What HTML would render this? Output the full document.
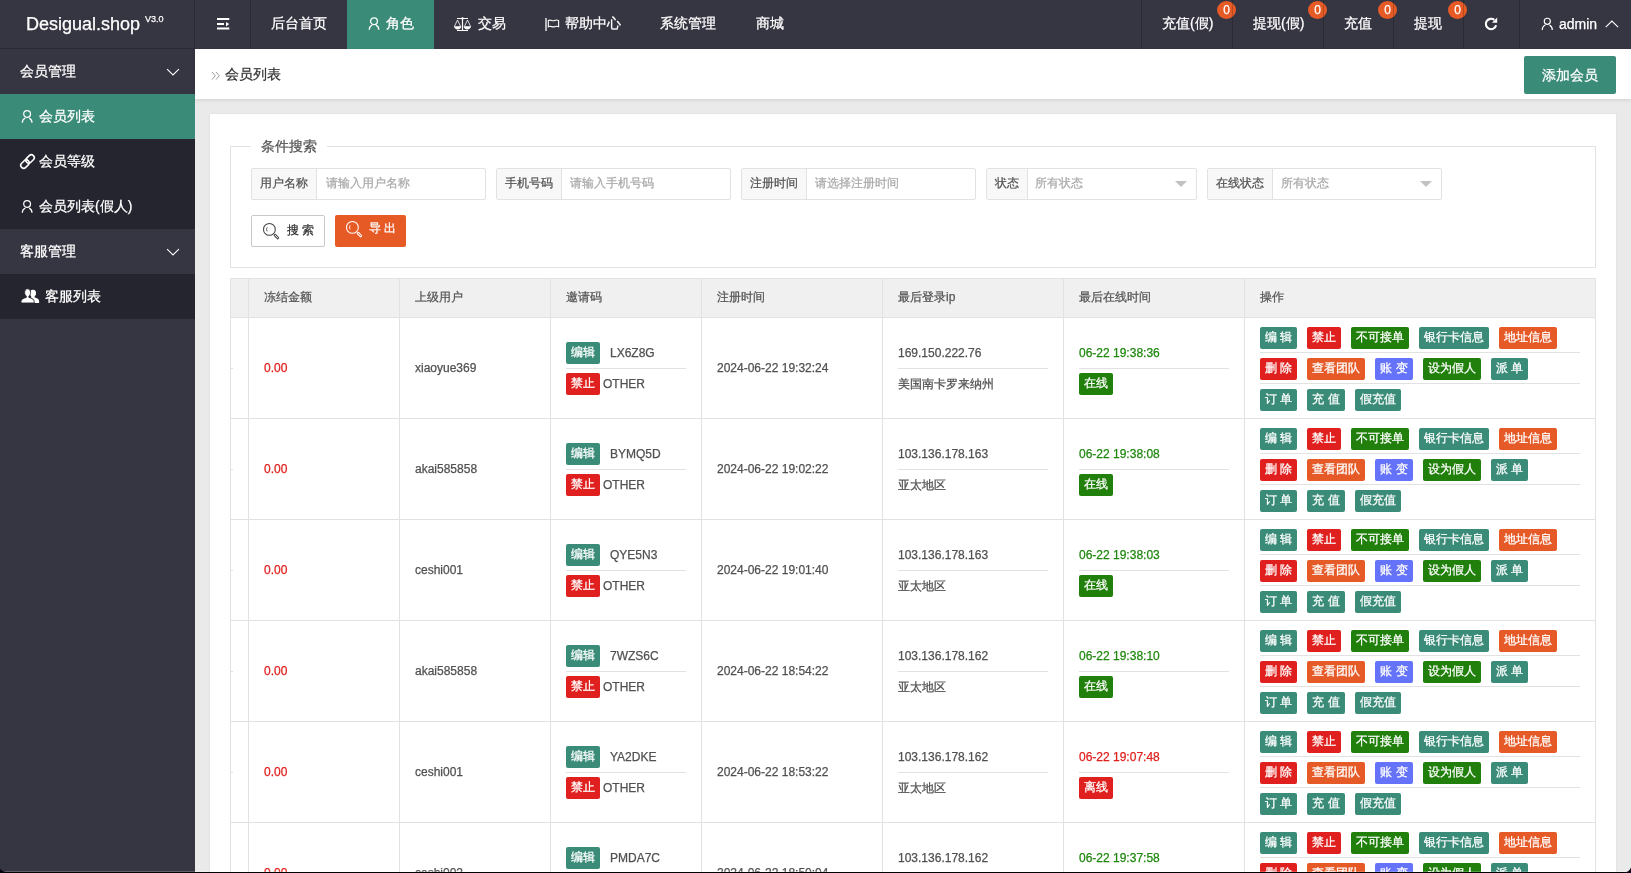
<!DOCTYPE html>
<html><head><meta charset="utf-8">
<style>
*{margin:0;padding:0;box-sizing:border-box}
html,body{width:1631px;height:873px;overflow:hidden;background:#eaeaea;font-family:"Liberation Sans",sans-serif;font-size:14px;color:#333;position:relative;-webkit-text-stroke-width:0.25px}
div,span{position:absolute;white-space:nowrap}
#header{left:0;top:0;width:1631px;height:49px;background:#363542}
#logo{left:0;top:0;width:195px;height:48px;color:#fff}
#logo .t{left:26px;top:13px;font-size:18px;line-height:22px}
#logo .v{left:145px;top:14px;font-size:9px;line-height:11px}
.hdiv{top:0;width:1px;height:49px;background:rgba(0,0,0,.2)}
.nav{top:0;height:49px;line-height:47px;color:#fff;font-size:14px}
.act,.si.act{background:#3a8c78}
.badge{top:1px;width:19px;height:18px;border-radius:50%;background:#e65a26;color:#fff;font-size:12px;line-height:18px;text-align:center}
#side{left:0;top:49px;width:195px;height:824px;background:#363542}
.sg{left:0;width:195px;height:45px;line-height:45px;color:#fff;font-size:14px}
.si{left:0;width:195px;height:45px;line-height:45px;color:#fff;font-size:14px;background:#25252f}
#crumb{left:195px;top:49px;width:1436px;height:50px;background:#fff;box-shadow:0 1px 4px rgba(0,0,0,.12)}
#card{left:210px;top:114px;width:1406px;height:780px;background:#fff;box-shadow:0 0 2px rgba(0,0,0,.08)}
.fs{left:230px;top:146px;width:1366px;height:122px;border:1px solid #e2e2e2}
.legend{left:251px;top:136px;padding:0 10px;background:#fff;font-size:14px;color:#555;line-height:20px}
.ig{top:168px;height:32px;border:1px solid #e2e2e2;border-radius:2px;background:#fff}
.ig .l{left:0;top:0;height:30px;line-height:29px;background:#f8f8f8;border-right:1px solid #e2e2e2;color:#555;font-size:12px;text-align:center}
.ig .p{top:0;height:30px;line-height:29px;color:#aaa;font-size:12px}
.tri{width:0;height:0;border-left:6px solid transparent;border-right:6px solid transparent;border-top:6px solid #c2c2c2;top:12px}
.btn{top:215px;height:32px;border-radius:2px;font-size:12px;line-height:30px}
.thead{background:#f0f0f0}
.th{height:38px;line-height:38px;font-size:12px;color:#555}
.vl{width:1px;background:#e2e2e2}
.hl{height:1px;background:#e2e2e2}
.hl2{height:1px;background:#e2e2e2}
.td{font-size:12px;line-height:20px;color:#505050}
.tag{height:22px;line-height:21px;padding:0 5px;color:#fff;border-radius:2px;font-size:12px;text-align:center}
.g{background:#3a8c78}.r{background:#e0201e}.dg{background:#21800c}.o{background:#e65a28}.b{background:#6572fa}
.td.red{color:#e0201e}.td.grn{color:#1f870e}
#bedge{left:0;top:872px;width:1631px;height:1px;background:#000}
#bhl{left:0;top:871px;width:1631px;height:1px;background:rgba(255,255,255,.22)}
#wrap{left:0;top:0;width:1631px;height:873px;will-change:transform}

</style></head><body><div id="wrap">
<div id="header">
  <div id="logo"><span class="t">Desigual.shop</span><span class="v">V3.0</span></div>
  <div class="hdiv" style="left:194px"></div><div style="left:0;top:48px;width:195px;height:1px;background:#2a2934"></div>
  <div class="hdiv" style="left:250px"></div>
  <svg style="position:absolute;left:216px;top:17px" width="14" height="14" viewBox="0 0 14 14"><path d="M1 2h12.3M1 7h7M1 11.5h12.3" stroke="#fff" stroke-width="2"/><path d="M10 5l3.2 2-3.2 2.5z" fill="#fff"/></svg>
  <div class="nav" style="left:271px">后台首页</div>
  <div class="nav act" style="left:347px;width:87px"></div>
  <svg style="position:absolute;left:368px;top:16px" width="12" height="15" viewBox="0 0 12 15"><circle cx="6" cy="5.2" r="3.4" stroke="#fff" stroke-width="1.3" fill="none"/><path d="M1.3 13.7A5 5 0 0 1 4.2 9M7.9 9.1A5 5 0 0 1 10.8 13.7" stroke="#fff" stroke-width="1.3" fill="none"/></svg>
  <div class="nav" style="left:386px">角色</div>
  <svg style="position:absolute;left:453px;top:16px" width="19" height="16" viewBox="0 0 19 16"><path d="M4 2.5h11M4 14.5h11M9.5 2v12.5" stroke="#fff" stroke-width="1.2"/><circle cx="9.5" cy="2.4" r="1.2" fill="#fff"/><path d="M1.4 10.5L4.5 4 7.6 10.5M11.4 10.5L14.5 4 17.6 10.5" stroke="#fff" stroke-width="0.8" fill="none"/><path d="M1 10.3h7.3c0 2-1.6 3.1-3.65 3.1S1 12.3 1 10.3zM10.7 10.3H18c0 2-1.6 3.1-3.65 3.1s-3.65-1.1-3.65-3.1z" fill="#fff"/></svg>
  <div class="nav" style="left:478px">交易</div>
  <svg style="position:absolute;left:544px;top:16px" width="17" height="16" viewBox="0 0 17 16"><path d="M2 2v13" stroke="#fff" stroke-width="1.3"/><path d="M4.3 4.5c2.2-1.4 4.2 1 6.3 0 1.5-.7 2.7-.6 4 0v6.2c-1.3-.6-2.5-.7-4 0-2.1 1-4.1-1.4-6.3 0z" stroke="#fff" stroke-width="1.1" fill="none"/></svg>
  <div class="nav" style="left:565px">帮助中心</div>
  <div class="nav" style="left:660px">系统管理</div>
  <div class="nav" style="left:756px">商城</div>

  <div class="nav" style="left:1162px">充值(假)</div><div class="badge" style="left:1217px">0</div>
  <div class="nav" style="left:1253px">提现(假)</div><div class="badge" style="left:1308px">0</div>
  <div class="nav" style="left:1344px">充值</div><div class="badge" style="left:1378px">0</div>
  <div class="nav" style="left:1414px">提现</div><div class="badge" style="left:1448px">0</div>
  <div class="hdiv" style="left:1141px"></div>
  <div class="hdiv" style="left:1232px"></div>
  <div class="hdiv" style="left:1323px"></div>
  <div class="hdiv" style="left:1393px"></div>
  <div class="hdiv" style="left:1463px"></div>
  <div class="hdiv" style="left:1519px"></div>
  <svg style="position:absolute;left:1483px;top:16px" width="16" height="16" viewBox="0 0 16 16"><path d="M13.1 9.2A5.2 5.2 0 1 1 11.3 3.9" stroke="#fff" stroke-width="2.1" fill="none"/><path d="M14.2 1.6v5.2H9z" fill="#fff"/></svg>
  <svg style="position:absolute;left:1541px;top:16px" width="13" height="15" viewBox="0 0 13 15"><circle cx="6.3" cy="5.3" r="3.05" stroke="#fff" stroke-width="1.15" fill="none"/><path d="M1.3 13.9A5.2 5.2 0 0 1 4.3 9M8.5 9.1A5.2 5.2 0 0 1 11.3 13.9" stroke="#fff" stroke-width="1.2" fill="none"/></svg>
  <div class="nav" style="left:1559px;top:1px">admin</div>
  <svg style="position:absolute;left:1605px;top:19px" width="14" height="10" viewBox="0 0 14 10"><path d="M0.7 8.2L6.9 2 13.1 8.2" stroke="#fff" stroke-width="1.1" fill="none"/></svg>
</div>

<div id="side">
  <div class="sg" style="top:0"><span style="left:20px">会员管理</span>
    <svg style="position:absolute;left:166px;top:18px" width="14" height="10" viewBox="0 0 14 10"><path d="M1.1 2.1L7 8 12.9 2.1" stroke="#fff" stroke-width="1.1" fill="none"/></svg></div>
  <div class="si act" style="top:45px"><span style="left:39px">会员列表</span>
    <svg style="position:absolute;left:21px;top:15px" width="13" height="15" viewBox="0 0 13 15"><circle cx="6.1" cy="5" r="3.4" stroke="#fff" stroke-width="1.2" fill="none"/><path d="M1.3 13.7A5.2 5.2 0 0 1 4.3 9M8.2 9.1A5.2 5.2 0 0 1 11 13.7" stroke="#fff" stroke-width="1.2" fill="none"/></svg></div>
  <div class="si" style="top:90px"><span style="left:39px">会员等级</span>
    <svg style="position:absolute;left:19px;top:14px" width="17" height="17" viewBox="0 0 17 17"><g transform="rotate(-45 8.5 8.5)" fill="none" stroke="#fff" stroke-width="1.6"><rect x="0.2" y="5.6" width="9.4" height="5.8" rx="2.9"/><rect x="7.4" y="5.6" width="9.4" height="5.8" rx="2.9"/></g></svg></div>
  <div class="si" style="top:135px"><span style="left:39px">会员列表(假人)</span>
    <svg style="position:absolute;left:21px;top:15px" width="13" height="15" viewBox="0 0 13 15"><circle cx="6.1" cy="5" r="3.4" stroke="#fff" stroke-width="1.2" fill="none"/><path d="M1.3 13.7A5.2 5.2 0 0 1 4.3 9M8.2 9.1A5.2 5.2 0 0 1 11 13.7" stroke="#fff" stroke-width="1.2" fill="none"/></svg></div>
  <div class="sg" style="top:180px"><span style="left:20px">客服管理</span>
    <svg style="position:absolute;left:166px;top:18px" width="14" height="10" viewBox="0 0 14 10"><path d="M1.1 2.1L7 8 12.9 2.1" stroke="#fff" stroke-width="1.1" fill="none"/></svg></div>
  <div class="si" style="top:225px"><span style="left:45px">客服列表</span>
    <svg style="position:absolute;left:21px;top:14px" width="19" height="16" viewBox="0 0 19 16"><path d="M12.3 1.8c1.7 0 2.8 1.4 2.8 3.3 0 1.4-.6 2.6-1.5 3.3v1c2.6.6 4.5 1.8 4.5 3.6v2H12.5v-2.2c0-1.6-1.2-2.6-3-3.3.4-.2.7-.4.7-.9V8.3c-.9-.7-1.5-1.9-1.5-3.2 0-1.9 1.1-3.3 2.8-3.3z" fill="#fff"/><path d="M6.5.8c1.9 0 3.1 1.6 3.1 3.7 0 1.5-.7 2.8-1.7 3.6v1.3c3 .7 5.3 2 5.3 4.1V15H0v-1.5c0-2.1 2.3-3.4 5.3-4.1V8.1C4.3 7.3 3.6 6 3.6 4.5 3.6 2.4 4.7.8 6.5.8z" fill="#fff" stroke="#25252f" stroke-width="0.9"/></svg></div>
</div>

<div id="crumb">
  <svg style="position:absolute;left:16px;top:22px" width="10" height="10" viewBox="0 0 10 10"><path d="M1 1L4.3 4.8 1 8.6M5 1L8.3 4.8 5 8.6" stroke="#999" stroke-width="1" fill="none"/></svg>
  <span style="left:30px;top:15px;font-size:14px;line-height:20px;color:#333">会员列表</span>
  <div class="act" style="left:1329px;top:7px;width:92px;height:38px;border-radius:2px;color:#fff;font-size:14px;line-height:38px;text-align:center">添加会员</div>
</div>
<div id="card"></div>
<div class="fs"></div>
<div class="legend">条件搜索</div>

<div class="ig" style="left:251px;width:235px"><div class="l" style="width:65px">用户名称</div><div class="p" style="left:74px">请输入用户名称</div></div>
<div class="ig" style="left:496px;width:235px"><div class="l" style="width:65px">手机号码</div><div class="p" style="left:73px">请输入手机号码</div></div>
<div class="ig" style="left:741px;width:235px"><div class="l" style="width:65px">注册时间</div><div class="p" style="left:73px">请选择注册时间</div></div>
<div class="ig" style="left:986px;width:211px"><div class="l" style="width:41px">状态</div><div class="p" style="left:48px">所有状态</div><div class="tri" style="left:188px"></div></div>
<div class="ig" style="left:1207px;width:235px"><div class="l" style="width:65px">在线状态</div><div class="p" style="left:73px">所有状态</div><div class="tri" style="left:212px"></div></div>

<div class="btn" style="left:251px;width:74px;border:1px solid #c9c9c9;background:#fff;color:#333">
  <svg style="position:absolute;left:10px;top:6px" width="18" height="18" viewBox="0 0 18 18"><circle cx="7.4" cy="7.4" r="5.9" stroke="#444" stroke-width="1.05" fill="none"/><path d="M5.2 5.4a3.2 3.2 0 0 0 0 3.9" stroke="#444" stroke-width="0.9" fill="none"/><path d="M13.1 13.2l2.6 2.7" stroke="#444" stroke-width="2.8" stroke-linecap="round"/><path d="M13.1 13.2l2.6 2.7" stroke="#fff" stroke-width="1" stroke-linecap="round"/></svg>
  <span style="left:35px;top:-1px">搜 索</span></div>
<div class="btn" style="left:335px;width:71px;background:#e65a26;color:#fff">
  <svg style="position:absolute;left:10px;top:5px" width="18" height="18" viewBox="0 0 18 18"><circle cx="7.4" cy="7.4" r="5.9" stroke="#fff" stroke-width="1.05" fill="none"/><path d="M5.2 5.4a3.2 3.2 0 0 0 0 3.9" stroke="#fff" stroke-width="0.9" fill="none"/><path d="M13.1 13.2l2.6 2.7" stroke="#fff" stroke-width="2.8" stroke-linecap="round"/><path d="M13.1 13.2l2.6 2.7" stroke="#e65a26" stroke-width="1" stroke-linecap="round"/></svg>
  <span style="left:34px;top:-2px">导 出</span></div>

<div class="thead" style="left:230px;top:278px;width:1366px;height:40px"></div>
<div class="th" style="left:264px;top:278px">冻结金额</div>
<div class="th" style="left:415px;top:278px">上级用户</div>
<div class="th" style="left:566px;top:278px">邀请码</div>
<div class="th" style="left:717px;top:278px">注册时间</div>
<div class="th" style="left:898px;top:278px">最后登录ip</div>
<div class="th" style="left:1079px;top:278px">最后在线时间</div>
<div class="th" style="left:1260px;top:278px">操作</div>
<div class="vl" style="left:230px;top:278px;height:595px"></div>
<div class="vl" style="left:248px;top:278px;height:595px"></div>
<div class="vl" style="left:399px;top:278px;height:595px"></div>
<div class="vl" style="left:550px;top:278px;height:595px"></div>
<div class="vl" style="left:701px;top:278px;height:595px"></div>
<div class="vl" style="left:882px;top:278px;height:595px"></div>
<div class="vl" style="left:1063px;top:278px;height:595px"></div>
<div class="vl" style="left:1244px;top:278px;height:595px"></div>
<div class="vl" style="left:1595px;top:278px;height:595px"></div>
<div class="hl" style="left:230px;top:278px;width:1366px"></div>
<div class="hl" style="left:230px;top:317px;width:1366px"></div>
<div class="hl" style="left:230px;top:418px;width:1366px"></div>
<div class="hl" style="left:230px;top:519px;width:1366px"></div>
<div class="hl" style="left:230px;top:620px;width:1366px"></div>
<div class="hl" style="left:230px;top:721px;width:1366px"></div>
<div class="hl" style="left:230px;top:822px;width:1366px"></div>
<div class="hl2" style="left:231px;top:368px;width:2px"></div>
<div class="td red" style="left:264px;top:358px">0.00</div>
<div class="td" style="left:415px;top:358px">xiaoyue369</div>
<div class="tag g" style="left:566px;top:342px">编辑</div>
<div class="td" style="left:610px;top:343px">LX6Z8G</div>
<div class="hl2" style="left:566px;top:368px;width:120px"></div>
<div class="tag r" style="left:566px;top:373px">禁止</div>
<div class="td" style="left:603px;top:374px">OTHER</div>
<div class="td" style="left:717px;top:358px">2024-06-22 19:32:24</div>
<div class="td" style="left:898px;top:343px">169.150.222.76</div>
<div class="hl2" style="left:898px;top:368px;width:150px"></div>
<div class="td" style="left:898px;top:374px">美国南卡罗来纳州</div>
<div class="td grn" style="left:1079px;top:343px">06-22 19:38:36</div>
<div class="hl2" style="left:1079px;top:368px;width:150px"></div>
<div class="tag dg" style="left:1079px;top:373px">在线</div>
<div class="tag g" style="left:1260px;top:327px;width:37px">编 辑</div>
<div class="tag r" style="left:1307px;top:327px;width:34px">禁止</div>
<div class="tag dg" style="left:1351px;top:327px;width:58px">不可接单</div>
<div class="tag g" style="left:1419px;top:327px;width:70px">银行卡信息</div>
<div class="tag o" style="left:1499px;top:327px;width:58px">地址信息</div>
<div class="hl2" style="left:1260px;top:352px;width:320px"></div>
<div class="tag r" style="left:1260px;top:358px;width:37px">删 除</div>
<div class="tag o" style="left:1307px;top:358px;width:58px">查看团队</div>
<div class="tag b" style="left:1375px;top:358px;width:38px">账 变</div>
<div class="tag dg" style="left:1423px;top:358px;width:58px">设为假人</div>
<div class="tag g" style="left:1491px;top:358px;width:37px">派 单</div>
<div class="hl2" style="left:1260px;top:383px;width:320px"></div>
<div class="tag g" style="left:1260px;top:389px;width:37px">订 单</div>
<div class="tag g" style="left:1307px;top:389px;width:38px">充 值</div>
<div class="tag g" style="left:1355px;top:389px;width:46px">假充值</div>
<div class="hl2" style="left:231px;top:469px;width:2px"></div>
<div class="td red" style="left:264px;top:459px">0.00</div>
<div class="td" style="left:415px;top:459px">akai585858</div>
<div class="tag g" style="left:566px;top:443px">编辑</div>
<div class="td" style="left:610px;top:444px">BYMQ5D</div>
<div class="hl2" style="left:566px;top:469px;width:120px"></div>
<div class="tag r" style="left:566px;top:474px">禁止</div>
<div class="td" style="left:603px;top:475px">OTHER</div>
<div class="td" style="left:717px;top:459px">2024-06-22 19:02:22</div>
<div class="td" style="left:898px;top:444px">103.136.178.163</div>
<div class="hl2" style="left:898px;top:469px;width:150px"></div>
<div class="td" style="left:898px;top:475px">亚太地区</div>
<div class="td grn" style="left:1079px;top:444px">06-22 19:38:08</div>
<div class="hl2" style="left:1079px;top:469px;width:150px"></div>
<div class="tag dg" style="left:1079px;top:474px">在线</div>
<div class="tag g" style="left:1260px;top:428px;width:37px">编 辑</div>
<div class="tag r" style="left:1307px;top:428px;width:34px">禁止</div>
<div class="tag dg" style="left:1351px;top:428px;width:58px">不可接单</div>
<div class="tag g" style="left:1419px;top:428px;width:70px">银行卡信息</div>
<div class="tag o" style="left:1499px;top:428px;width:58px">地址信息</div>
<div class="hl2" style="left:1260px;top:453px;width:320px"></div>
<div class="tag r" style="left:1260px;top:459px;width:37px">删 除</div>
<div class="tag o" style="left:1307px;top:459px;width:58px">查看团队</div>
<div class="tag b" style="left:1375px;top:459px;width:38px">账 变</div>
<div class="tag dg" style="left:1423px;top:459px;width:58px">设为假人</div>
<div class="tag g" style="left:1491px;top:459px;width:37px">派 单</div>
<div class="hl2" style="left:1260px;top:484px;width:320px"></div>
<div class="tag g" style="left:1260px;top:490px;width:37px">订 单</div>
<div class="tag g" style="left:1307px;top:490px;width:38px">充 值</div>
<div class="tag g" style="left:1355px;top:490px;width:46px">假充值</div>
<div class="hl2" style="left:231px;top:570px;width:2px"></div>
<div class="td red" style="left:264px;top:560px">0.00</div>
<div class="td" style="left:415px;top:560px">ceshi001</div>
<div class="tag g" style="left:566px;top:544px">编辑</div>
<div class="td" style="left:610px;top:545px">QYE5N3</div>
<div class="hl2" style="left:566px;top:570px;width:120px"></div>
<div class="tag r" style="left:566px;top:575px">禁止</div>
<div class="td" style="left:603px;top:576px">OTHER</div>
<div class="td" style="left:717px;top:560px">2024-06-22 19:01:40</div>
<div class="td" style="left:898px;top:545px">103.136.178.163</div>
<div class="hl2" style="left:898px;top:570px;width:150px"></div>
<div class="td" style="left:898px;top:576px">亚太地区</div>
<div class="td grn" style="left:1079px;top:545px">06-22 19:38:03</div>
<div class="hl2" style="left:1079px;top:570px;width:150px"></div>
<div class="tag dg" style="left:1079px;top:575px">在线</div>
<div class="tag g" style="left:1260px;top:529px;width:37px">编 辑</div>
<div class="tag r" style="left:1307px;top:529px;width:34px">禁止</div>
<div class="tag dg" style="left:1351px;top:529px;width:58px">不可接单</div>
<div class="tag g" style="left:1419px;top:529px;width:70px">银行卡信息</div>
<div class="tag o" style="left:1499px;top:529px;width:58px">地址信息</div>
<div class="hl2" style="left:1260px;top:554px;width:320px"></div>
<div class="tag r" style="left:1260px;top:560px;width:37px">删 除</div>
<div class="tag o" style="left:1307px;top:560px;width:58px">查看团队</div>
<div class="tag b" style="left:1375px;top:560px;width:38px">账 变</div>
<div class="tag dg" style="left:1423px;top:560px;width:58px">设为假人</div>
<div class="tag g" style="left:1491px;top:560px;width:37px">派 单</div>
<div class="hl2" style="left:1260px;top:585px;width:320px"></div>
<div class="tag g" style="left:1260px;top:591px;width:37px">订 单</div>
<div class="tag g" style="left:1307px;top:591px;width:38px">充 值</div>
<div class="tag g" style="left:1355px;top:591px;width:46px">假充值</div>
<div class="hl2" style="left:231px;top:671px;width:2px"></div>
<div class="td red" style="left:264px;top:661px">0.00</div>
<div class="td" style="left:415px;top:661px">akai585858</div>
<div class="tag g" style="left:566px;top:645px">编辑</div>
<div class="td" style="left:610px;top:646px">7WZS6C</div>
<div class="hl2" style="left:566px;top:671px;width:120px"></div>
<div class="tag r" style="left:566px;top:676px">禁止</div>
<div class="td" style="left:603px;top:677px">OTHER</div>
<div class="td" style="left:717px;top:661px">2024-06-22 18:54:22</div>
<div class="td" style="left:898px;top:646px">103.136.178.162</div>
<div class="hl2" style="left:898px;top:671px;width:150px"></div>
<div class="td" style="left:898px;top:677px">亚太地区</div>
<div class="td grn" style="left:1079px;top:646px">06-22 19:38:10</div>
<div class="hl2" style="left:1079px;top:671px;width:150px"></div>
<div class="tag dg" style="left:1079px;top:676px">在线</div>
<div class="tag g" style="left:1260px;top:630px;width:37px">编 辑</div>
<div class="tag r" style="left:1307px;top:630px;width:34px">禁止</div>
<div class="tag dg" style="left:1351px;top:630px;width:58px">不可接单</div>
<div class="tag g" style="left:1419px;top:630px;width:70px">银行卡信息</div>
<div class="tag o" style="left:1499px;top:630px;width:58px">地址信息</div>
<div class="hl2" style="left:1260px;top:655px;width:320px"></div>
<div class="tag r" style="left:1260px;top:661px;width:37px">删 除</div>
<div class="tag o" style="left:1307px;top:661px;width:58px">查看团队</div>
<div class="tag b" style="left:1375px;top:661px;width:38px">账 变</div>
<div class="tag dg" style="left:1423px;top:661px;width:58px">设为假人</div>
<div class="tag g" style="left:1491px;top:661px;width:37px">派 单</div>
<div class="hl2" style="left:1260px;top:686px;width:320px"></div>
<div class="tag g" style="left:1260px;top:692px;width:37px">订 单</div>
<div class="tag g" style="left:1307px;top:692px;width:38px">充 值</div>
<div class="tag g" style="left:1355px;top:692px;width:46px">假充值</div>
<div class="hl2" style="left:231px;top:772px;width:2px"></div>
<div class="td red" style="left:264px;top:762px">0.00</div>
<div class="td" style="left:415px;top:762px">ceshi001</div>
<div class="tag g" style="left:566px;top:746px">编辑</div>
<div class="td" style="left:610px;top:747px">YA2DKE</div>
<div class="hl2" style="left:566px;top:772px;width:120px"></div>
<div class="tag r" style="left:566px;top:777px">禁止</div>
<div class="td" style="left:603px;top:778px">OTHER</div>
<div class="td" style="left:717px;top:762px">2024-06-22 18:53:22</div>
<div class="td" style="left:898px;top:747px">103.136.178.162</div>
<div class="hl2" style="left:898px;top:772px;width:150px"></div>
<div class="td" style="left:898px;top:778px">亚太地区</div>
<div class="td red" style="left:1079px;top:747px">06-22 19:07:48</div>
<div class="hl2" style="left:1079px;top:772px;width:150px"></div>
<div class="tag r" style="left:1079px;top:777px">离线</div>
<div class="tag g" style="left:1260px;top:731px;width:37px">编 辑</div>
<div class="tag r" style="left:1307px;top:731px;width:34px">禁止</div>
<div class="tag dg" style="left:1351px;top:731px;width:58px">不可接单</div>
<div class="tag g" style="left:1419px;top:731px;width:70px">银行卡信息</div>
<div class="tag o" style="left:1499px;top:731px;width:58px">地址信息</div>
<div class="hl2" style="left:1260px;top:756px;width:320px"></div>
<div class="tag r" style="left:1260px;top:762px;width:37px">删 除</div>
<div class="tag o" style="left:1307px;top:762px;width:58px">查看团队</div>
<div class="tag b" style="left:1375px;top:762px;width:38px">账 变</div>
<div class="tag dg" style="left:1423px;top:762px;width:58px">设为假人</div>
<div class="tag g" style="left:1491px;top:762px;width:37px">派 单</div>
<div class="hl2" style="left:1260px;top:787px;width:320px"></div>
<div class="tag g" style="left:1260px;top:793px;width:37px">订 单</div>
<div class="tag g" style="left:1307px;top:793px;width:38px">充 值</div>
<div class="tag g" style="left:1355px;top:793px;width:46px">假充值</div>
<div class="hl2" style="left:231px;top:873px;width:2px"></div>
<div class="td red" style="left:264px;top:863px">0.00</div>
<div class="td" style="left:415px;top:863px">ceshi002</div>
<div class="tag g" style="left:566px;top:847px">编辑</div>
<div class="td" style="left:610px;top:848px">PMDA7C</div>
<div class="hl2" style="left:566px;top:873px;width:120px"></div>
<div class="tag r" style="left:566px;top:878px">禁止</div>
<div class="td" style="left:603px;top:879px">OTHER</div>
<div class="td" style="left:717px;top:863px">2024-06-22 18:50:04</div>
<div class="td" style="left:898px;top:848px">103.136.178.162</div>
<div class="hl2" style="left:898px;top:873px;width:150px"></div>
<div class="td" style="left:898px;top:879px">亚太地区</div>
<div class="td grn" style="left:1079px;top:848px">06-22 19:37:58</div>
<div class="hl2" style="left:1079px;top:873px;width:150px"></div>
<div class="tag dg" style="left:1079px;top:878px">在线</div>
<div class="tag g" style="left:1260px;top:832px;width:37px">编 辑</div>
<div class="tag r" style="left:1307px;top:832px;width:34px">禁止</div>
<div class="tag dg" style="left:1351px;top:832px;width:58px">不可接单</div>
<div class="tag g" style="left:1419px;top:832px;width:70px">银行卡信息</div>
<div class="tag o" style="left:1499px;top:832px;width:58px">地址信息</div>
<div class="hl2" style="left:1260px;top:857px;width:320px"></div>
<div class="tag r" style="left:1260px;top:863px;width:37px">删 除</div>
<div class="tag o" style="left:1307px;top:863px;width:58px">查看团队</div>
<div class="tag b" style="left:1375px;top:863px;width:38px">账 变</div>
<div class="tag dg" style="left:1423px;top:863px;width:58px">设为假人</div>
<div class="tag g" style="left:1491px;top:863px;width:37px">派 单</div>
<div class="hl2" style="left:1260px;top:888px;width:320px"></div>
<div class="tag g" style="left:1260px;top:894px;width:37px">订 单</div>
<div class="tag g" style="left:1307px;top:894px;width:38px">充 值</div>
<div class="tag g" style="left:1355px;top:894px;width:46px">假充值</div>
<div id="bhl"></div><div id="bedge"></div><svg style="position:absolute;left:1619px;top:861px" width="12" height="12" viewBox="0 0 12 12"><path d="M12 12H4C8 11.5 11 9.5 12 6.5z" fill="#12061a"/></svg><svg style="position:absolute;left:0;top:866px" width="6" height="7" viewBox="0 0 6 7"><path d="M0 2.5C1 4.5 3 5.5 6 6V7H0z" fill="#0a0410"/></svg>
</div></body></html>
